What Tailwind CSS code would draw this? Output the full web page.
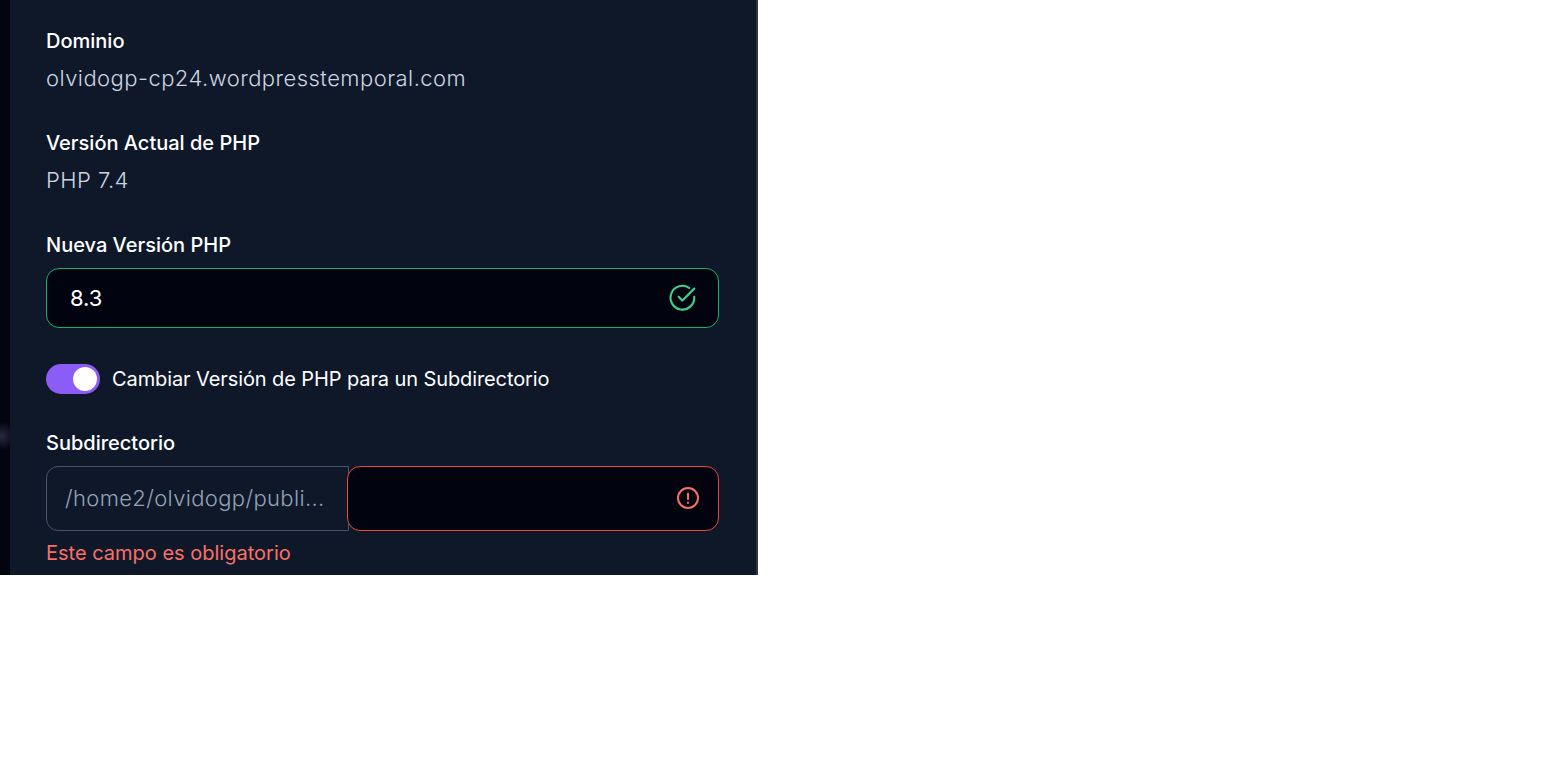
<!DOCTYPE html>
<html lang="en">

<head>
	<meta charset="UTF-8" />
	<title>Cambiar Versión de PHP</title>
	<script src="https://cdn.jsdelivr.net/npm/@tailwindcss/browser@4"></script>
</head>

<body class="bg-white font-['Inter',sans-serif]">
	<div class="w-[758px] h-[575px] overflow-hidden pl-[10px] bg-[radial-gradient(circle_at_2px_436px,#2a2840_0,#02040f_14px),radial-gradient(ellipse_at_0_30px,#15182a_0,#02040f_14px)] bg-[#02040f]">
		<div class="h-full bg-[#0f1829] border-r-2 border-[#34363b] pl-[36px] pr-[37px] pt-[28px]">
			<div class="h-[102px]">
				<p class="text-[20px] leading-[26px] font-medium text-white">Dominio</p>
				<p class="mt-[11px] text-[22px] leading-[26px] font-light text-[#cbd5e1] tracking-[0.45px]">olvidogp-cp24.wordpresstemporal.com</p>
			</div>
			<div class="h-[102px]">
				<p class="text-[20px] leading-[26px] font-medium text-white">Versión Actual de PHP</p>
				<p class="mt-[11px] text-[22px] leading-[26px] font-light text-[#cbd5e1] tracking-[0.45px]">PHP 7.4</p>
			</div>
			<p class="text-[20px] leading-[26px] font-medium text-white">Nueva Versión PHP</p>
			<div class="mt-[10px] h-[60px] rounded-[13px] border border-[#17b26a] bg-[#01030f] flex items-center justify-between pl-[23px] pr-[20px]">
				<span class="text-[22px] text-white font-normal">8.3</span>
				<svg class="w-[30px] h-[30px]" viewBox="0 0 24 24" fill="none" stroke="#3ecf8e" stroke-width="1.7" stroke-linecap="round" stroke-linejoin="round">
					<path d="M21 11a9.5 9.5 0 1 1-4-7" />
					<path d="M8.5 11l3 3L21 4.5" />
				</svg>
			</div>
			<div class="mt-[36px] flex items-center gap-[12px]">
				<div class="w-[54px] h-[30px] rounded-full bg-[#8b5cf6] flex items-center justify-end pr-[3px]">
					<div class="w-[24px] h-[24px] rounded-full bg-white"></div>
				</div>
				<span class="text-[20px] leading-[24px] text-white font-normal tracking-[-0.1px]">Cambiar Versión de PHP para un Subdirectorio</span>
			</div>
			<p class="mt-[36px] text-[20px] leading-[26px] font-medium text-white">Subdirectorio</p>
			<div class="mt-[10px] flex h-[65px]">
				<div class="w-[303px] shrink-0 rounded-l-[12px] border border-[#475569] pl-[18px] flex items-center">
					<span class="text-[22px] leading-[26px] -mt-[2px] font-light text-[#94a3b8] tracking-[0.35px]">/home2/olvidogp/publi...</span>
				</div>
				<div class="flex-1 -ml-[2px] rounded-[13px] border border-[#f04438] bg-[#01030f] flex items-center justify-end pr-[18px]">
					<svg class="w-[24px] h-[24px] -mt-[2px]" viewBox="0 0 24 24" fill="none" stroke="#f97066" stroke-width="2" stroke-linecap="round">
						<circle cx="12" cy="12" r="10" />
						<path d="M12 7.5v5.5M12 16.5v.5" />
					</svg>
				</div>
			</div>
			<p class="mt-[9px] text-[20px] leading-[26px] text-[#f97066]">Este campo es obligatorio</p>
		</div>
	</div>
</body>

</html>
